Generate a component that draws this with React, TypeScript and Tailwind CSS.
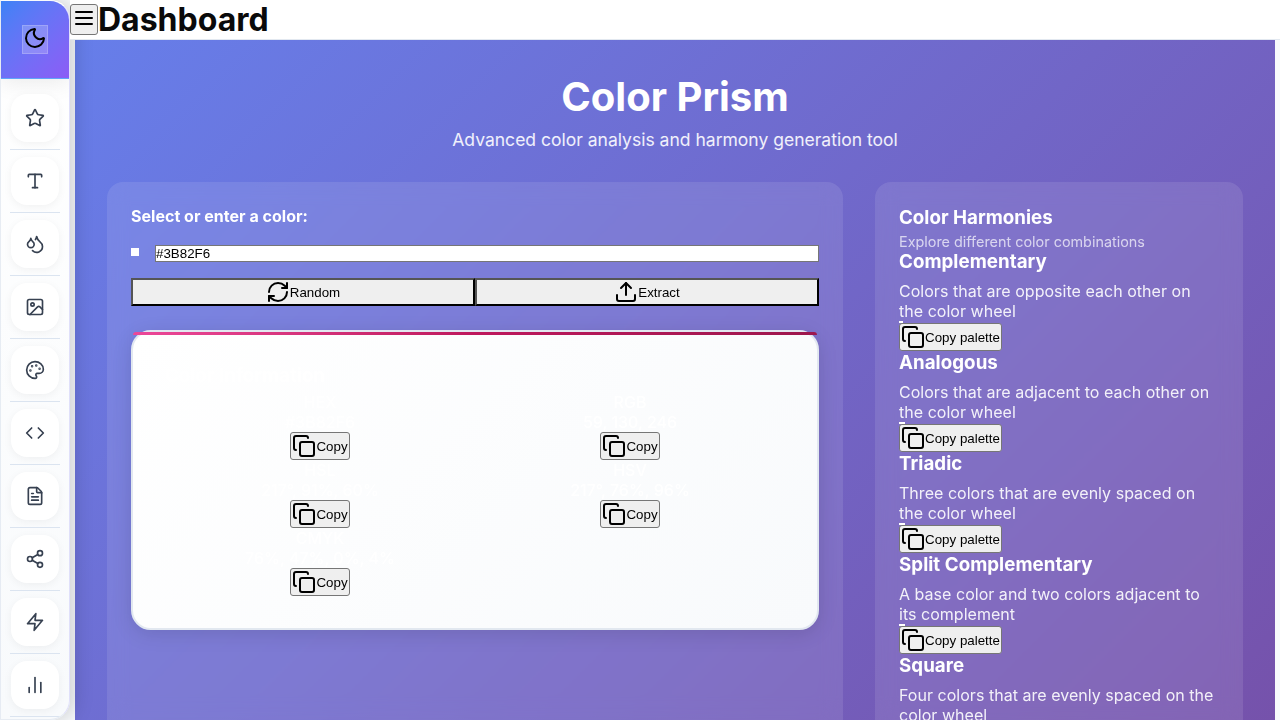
import {
  Star, Type, Droplets, Image, Palette, Code, FileText, Share2, Moon,
  ChartNoAxesColumn, Copy, RefreshCw, Upload,
} from "lucide-react";

function Bolt({ size }: { size: number }) {
  return (
    <svg width={size} height={size} viewBox="0 0 24 24" fill="none" stroke="currentColor" strokeWidth="2" strokeLinecap="round" strokeLinejoin="round">
      <polygon points="13 2 3 14 12 14 11 22 21 10 12 10 13 2" />
    </svg>
  );
}

function MenuBars() {
  return (
    <svg width="24" height="24" viewBox="0 0 24 24" fill="none" stroke="currentColor" strokeWidth="2" strokeLinecap="round">
      <path d="M4 6h16M4 12h16M4 18h16" />
    </svg>
  );
}

const tools = [Star, Type, Droplets, Image, Palette, Code, FileText, Share2, Bolt, ChartNoAxesColumn];

const values = [
  ["HEX", "#3B82F6"],
  ["RGB", "59, 130, 246"],
  ["HSL", "217°, 91%, 60%"],
  ["HSV", "217°, 76%, 96%"],
  ["CMYK", "76%, 47%, 0%, 4%"],
];

const harmonies = [
  { name: "Complementary", text: "Colors that are opposite each other on the color wheel", swatch: "w-1" },
  { name: "Analogous", text: "Colors that are adjacent to each other on the color wheel", swatch: "w-1.5" },
  { name: "Triadic", text: "Three colors that are evenly spaced on the color wheel", swatch: "w-1.5" },
  { name: "Split Complementary", text: "A base color and two colors adjacent to its complement", swatch: "w-1.5" },
  { name: "Square", text: "Four colors that are evenly spaced on the color wheel", swatch: "w-2" },
];

function CopyButton({ label, width }: { label: string; width: string }) {
  return (
    <button
      className={`flex h-7 items-center justify-center whitespace-nowrap rounded-[3px] border border-[#767676] bg-[#efefef] font-['Liberation_Sans',sans-serif] text-[13.333px] leading-none text-black ${width}`}
    >
      <Copy size={24} className="shrink-0" />
      <span className="pt-0.5">{label}</span>
    </button>
  );
}

function Sidebar() {
  return (
    <aside className="relative z-10 h-[720px] w-[70px] shrink-0 overflow-hidden rounded-r-[20px] border border-[#e2e8f0]/80 border-t-transparent border-r-[#e0e0fa] bg-linear-to-b from-white to-[#f8fafc]">
      <div className="flex h-[78px] items-center justify-center border-b border-[#60a5fa] bg-linear-135 from-[#3b82f6] to-[#8b5cf6] shadow-[0_4px_20px_rgba(0,0,0,0.08)]">
        <button className="flex h-[29px] w-[26px] items-start justify-center border border-white/20 bg-white/20 text-black">
          <Moon size={24} />
        </button>
      </div>
      <nav className="flex flex-col items-center pt-[15px]">
        {tools.map((Icon, i) => (
          <div key={i} className="flex h-[63px] flex-col items-center">
            <a className="flex size-12 shrink-0 items-center justify-center rounded-2xl bg-white text-[#374151] shadow-[0_2px_8px_rgba(0,0,0,0.05)]">
              <Icon size={20} />
            </a>
            <div className="mt-[7px] h-px w-[50px] shrink-0 bg-[#dbe4f0]" />
          </div>
        ))}
      </nav>
    </aside>
  );
}

export default function App() {
  return (
    <div className="flex h-[720px] w-[1280px] overflow-hidden bg-[#f8fafc] font-['Inter',sans-serif] text-base leading-5">
      <div className="relative z-10 h-[720px] w-[70px] shrink-0 rounded-r-[20px] shadow-[4px_0_20px_rgba(0,0,0,0.18)]">
        <Sidebar />
      </div>
      <div className="flex h-[720px] min-w-0 flex-1 flex-col">
        <header className="relative z-20 flex h-10 shrink-0 items-center border-b border-[#e2e8f0] bg-white">
          <button className="flex h-[31px] w-7 items-start justify-center rounded-[3px] border border-[#767676] bg-[#efefef] pt-px text-black">
            <MenuBars />
          </button>
          <h1 className="text-[32px] font-bold leading-[39px] text-[#0a0a0a]">Dashboard</h1>
        </header>

        <main className="ml-[5px] h-[960px] w-[1200px] shrink-0 overflow-hidden bg-linear-135 from-[#667eea] to-[#764ba2] px-8 pt-8 text-white">
          <div className="text-center">
            <h2 className="pt-px text-[40px] font-bold leading-[48px]">Color Prism</h2>
            <p className="mt-2 text-[17.52px] leading-[22px] text-white/90">Advanced color analysis and harmony generation tool</p>
          </div>

          <div className="mt-[31px] flex items-start gap-8">
            <section className="h-[900px] w-[736px] rounded-2xl bg-white/10 p-6 backdrop-blur-[10px]">
              <label className="block font-bold leading-5 tracking-[0.02px]">Select or enter a color:</label>
              <div className="mt-[19px] flex items-start gap-4">
                <span className="mt-[3px] size-2 bg-white" />
                <input
                  className="h-[17px] flex-1 border border-[#767676] bg-white font-['Liberation_Sans',sans-serif] text-[13.333px] leading-[15px] text-black"
                  defaultValue="#3B82F6"
                />
              </div>
              <div className="mt-4 flex font-['Liberation_Sans',sans-serif] text-[13.333px] leading-none text-black">
                <button className="flex h-7 flex-1 items-center justify-center border-2 border-t-[#555] border-r-black border-b-black border-l-[#555] bg-[#efefef]">
                  <RefreshCw size={24} />
                  <span className="pt-0.5">Random</span>
                </button>
                <button className="flex h-7 flex-1 items-center justify-center border-2 border-t-[#555] border-r-black border-b-black border-l-[#555] bg-[#efefef]">
                  <Upload size={24} />
                  <span className="pt-0.5">Extract</span>
                </button>
              </div>

              <div className="relative mt-6 h-[300px] rounded-[20px] border-2 border-[#e2e8f0] bg-linear-135 from-white to-[#f8fafc] p-8 shadow-[0_4px_20px_rgba(0,0,0,0.12)]">
                <div className="absolute inset-x-0 top-0 h-[3px] rounded-t-[20px] bg-linear-to-r from-[#ec4899] via-[#be185d] to-[#9d174d]" />
                <h3 className="h-7 text-[18.72px] font-bold leading-[23px]">Color Information</h3>
                <div className="grid grid-cols-2">
                  {values.map(([name, value]) => (
                    <div key={name} className="flex h-[68px] flex-col items-center">
                      <div className="leading-5 font-medium">{name}</div>
                      <div className="leading-5 font-medium">{value}</div>
                      <CopyButton label="Copy" width="w-[60px]" />
                    </div>
                  ))}
                </div>
              </div>
            </section>

            <section className="h-[900px] w-[368px] rounded-2xl bg-white/10 p-6 backdrop-blur-[10px]">
              <h3 className="text-[18.72px] font-bold leading-[23px] tracking-[0.03px]">Color Harmonies</h3>
              <p className="mt-1 text-[14.4px] leading-[17px] text-white/70">Explore different color combinations</p>
              {harmonies.map((h) => (
                <div key={h.name}>
                  <h4 className="text-[18.72px] font-bold leading-[23px] tracking-[0.05px]">{h.name}</h4>
                  <p className="mt-2 w-[316px] leading-5 tracking-[0.03px] text-white/90">{h.text}</p>
                  <div className={`h-0.5 bg-white ${h.swatch}`} />
                  <CopyButton label="Copy palette" width="w-[103px]" />
                </div>
              ))}
            </section>
          </div>
        </main>
      </div>
    </div>
  );
}
